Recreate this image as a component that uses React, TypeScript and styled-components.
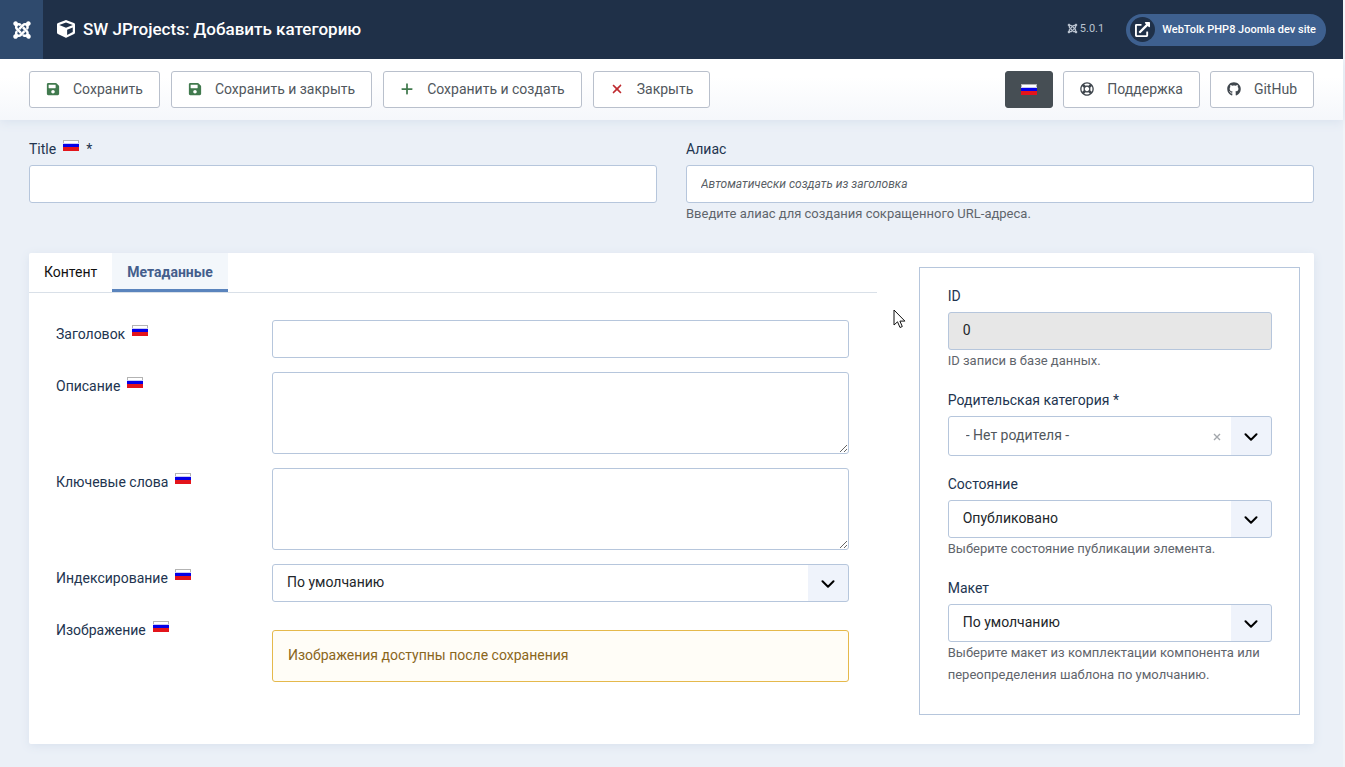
import React, { useState } from "react";
import styled, { createGlobalStyle } from "styled-components";
import { FaJoomla, FaSave, FaCube, FaExternalLinkAlt, FaGithub, FaRegLifeRing } from "react-icons/fa";
import { FaPlus, FaXmark } from "react-icons/fa6";

const GlobalStyle = createGlobalStyle`
  *, *::before, *::after { box-sizing: border-box; }
  body {
    margin: 0;
    background: #ebf0f7;
    color: #22262a;
    font: 400 14px/22px Roboto, "Open Sans", sans-serif;
  }
  button, input, select, textarea { font: inherit; color: inherit; margin: 0; }
  a { color: inherit; text-decoration: none; }
`;

const Page = styled.div`
  min-height: 100vh;
  border-right: 2px solid #f1f4f8;
`;

const Header = styled.header`
  position: relative;
  z-index: 1;
  display: flex;
  align-items: center;
  height: 59px;
  padding-right: 17px;
  background: #1f3048;
  color: #fff;
`;

const HomeLink = styled.a`
  display: flex;
  align-items: center;
  justify-content: center;
  align-self: stretch;
  width: 43px;
  background: #2f4a6d;
`;

const PageTitle = styled.h1`
  display: flex;
  align-items: center;
  gap: 8px;
  flex: 1;
  margin: 0 0 0 14px;
  padding-bottom: 2px;
  font-size: 17px;
  font-weight: 500;
`;

const Version = styled.div`
  display: flex;
  align-items: center;
  gap: 2px;
  margin-right: 22px;
  padding-bottom: 2px;
  color: #b9c2cf;
  font-size: 11px;
`;

const SiteLink = styled.a`
  display: flex;
  align-items: center;
  gap: 7px;
  height: 32px;
  padding: 0 10px 0 4px;
  border-radius: 16px;
  background: #3e608f;
  font-size: 11px;
  font-weight: 500;
`;

const SiteIcon = styled.span`
  display: flex;
  align-items: center;
  justify-content: center;
  width: 25px;
  height: 25px;
  border-radius: 50%;
  background: #1f3048;
`;

const Toolbar = styled.div`
  display: flex;
  justify-content: space-between;
  padding: 12px 29px;
  background: linear-gradient(#fff 30%, #f5f7fb);
  box-shadow: 0 2px 10px #d9e2ee;
`;

const ButtonGroup = styled.div<{ $gap: number }>`
  display: flex;
  gap: ${(p) => p.$gap}px;
`;

const ToolButton = styled.button`
  display: flex;
  align-items: center;
  gap: 11px;
  height: 37px;
  padding: 0 16px 2px 14px;
  border: 1px solid #b9c0cc;
  border-radius: 3px;
  background: #fff;
  color: #51575d;
`;

const ToolIcon = styled.span<{ $tone?: string }>`
  display: flex;
  justify-content: center;
  width: 18px;
  color: ${(p) => p.$tone ?? "#40474e"};
`;

const Main = styled.main`
  padding: 18px 29px 23px;
`;

const TitleRow = styled.div`
  display: grid;
  grid-template-columns: 1fr 1fr;
  gap: 29px;
  margin-bottom: 28px;
`;

const Field = styled.div`
  display: flex;
  flex-direction: column;
`;

const Label = styled.label`
  display: flex;
  gap: 7px;
  margin-bottom: 5px;
  color: #22344f;
`;

const FlagSvg = styled.svg`
  flex: none;
  width: 16px;
  height: 11px;
  margin-top: 2px;
`;

const LanguageButton = styled(ToolButton)`
  padding: 0 15px;
  border-color: #464e54;
  background: #464e54;
  ${FlagSvg} { margin-top: 0; }
`;

const Input = styled.input`
  width: 100%;
  height: 38px;
  padding: 0 14px 2px;
  border: 1px solid #b6c6dc;
  border-radius: 3px;
  background: #fff;
  &::placeholder {
    color: #5a5f66;
    font-size: 12px;
    font-style: italic;
    opacity: 1;
  }
  &:read-only {
    background: #e7e7e7;
  }
`;

const TextArea = styled.textarea`
  display: block;
  width: 100%;
  height: 82px;
  padding: 8px 14px;
  border: 1px solid #b6c6dc;
  border-radius: 3px;
  background: #fff;
  resize: vertical;
`;

const Help = styled.small`
  color: #5f656c;
  font-size: 13px;
`;

const Card = styled.section`
  display: grid;
  grid-template-columns: minmax(0, 1fr) 30%;
  align-items: start;
  gap: 42px;
  padding: 0 14px 29px 0;
  border-radius: 2px;
  background: #fff;
  box-shadow: 0 2px 10px #d9e2ee;
`;

const TabList = styled.div`
  display: flex;
  border-bottom: 1px solid #d9e0e8;
`;

const Tab = styled.button<{ $active: boolean }>`
  height: 39px;
  padding: 0 15px 2px;
  border: 0;
  background: ${(p) => (p.$active ? "#f3f7fb" : "transparent")};
  box-shadow: ${(p) => (p.$active ? "inset 0 -3px #5a84bd" : "none")};
  color: ${(p) => (p.$active ? "#445e8c" : "#111")};
  font-weight: ${(p) => (p.$active ? 700 : 400)};
`;

const Panel = styled.div`
  display: grid;
  gap: 14px;
  padding: 27px 28px 0 27px;
`;

const FormRow = styled.div`
  display: grid;
  grid-template-columns: 216px minmax(0, 1fr);
  align-items: start;
  & > ${Label} { margin: 3px 0 0; }
`;

const Alert = styled.div`
  margin-top: 14px;
  padding: 13px 15px 15px;
  border: 1px solid #e5b94c;
  border-radius: 3px;
  background: #fffdf7;
  color: #8a661c;
`;

const Aside = styled.fieldset`
  display: grid;
  gap: 17px;
  min-width: 0;
  margin: 14px 0 0;
  padding: 17px 27px 28px 28px;
  border: 1px solid #b6c6dc;
`;

const SelectBox = styled.div`
  position: relative;
`;

const NativeSelect = styled.select<{ $large?: boolean }>`
  appearance: none;
  display: block;
  width: 100%;
  height: ${(p) => (p.$large ? 40 : 38)}px;
  padding: 0 56px 2px ${(p) => (p.$large ? 17 : 14)}px;
  border: 1px solid #b6c6dc;
  border-radius: 3px;
  background: linear-gradient(#eff3fb, #eff3fb) right / 40px 100% no-repeat #fff;
  color: ${(p) => (p.$large ? "#51575d" : "#22262a")};
`;

const Chevron = styled.svg`
  position: absolute;
  top: 50%;
  right: 14px;
  width: 14px;
  height: 8px;
  margin-top: -3px;
  pointer-events: none;
`;

const ClearButton = styled.button`
  position: absolute;
  top: 50%;
  right: 51px;
  display: flex;
  margin-top: -3px;
  padding: 0;
  border: 0;
  background: none;
`;

const Pointer = styled.svg`
  position: absolute;
  top: 309px;
  left: 893px;
  width: 13px;
  height: 20px;
  pointer-events: none;
`;

function Flag() {
  return (
    <FlagSvg viewBox="0 0 16 11" aria-hidden="true">
      <rect width="16" height="11" fill="#b3b3b3" />
      <rect x="1" y="1" width="14" height="3" fill="#fff" />
      <rect y="3" width="16" height="1" fill="#ccccf4" />
      <rect y="4" width="16" height="3" fill="#0500e8" />
      <rect y="7" width="16" height="4" fill="#e3141b" />
    </FlagSvg>
  );
}

interface SelectProps {
  id: string;
  option: string;
  clearable?: boolean;
}

function Select({ id, option, clearable }: SelectProps) {
  return (
    <SelectBox>
      <NativeSelect id={id} $large={clearable}>
        <option>{option}</option>
      </NativeSelect>
      {clearable && (
        <ClearButton type="button" aria-label="Очистить">
          <svg width="8" height="8" viewBox="0 0 8 8" stroke="#a3a7ac" strokeWidth="1.4">
            <path d="M1 1l6 6M7 1L1 7" />
          </svg>
        </ClearButton>
      )}
      <Chevron viewBox="0 0 14 8" fill="none" stroke="#000" strokeWidth="2" strokeLinecap="round" strokeLinejoin="round">
        <path d="M1.5 1.2L7 6.7l5.500-5.500" />
      </Chevron>
    </SelectBox>
  );
}

const green = "#417a4e";
const red = "#bf2a2f";

export default function App() {
  const [tab, setTab] = useState("meta");
  return (
    <Page>
      <GlobalStyle />
      <Header>
        <HomeLink href="#" aria-label="Joomla">
          <FaJoomla size={20} />
        </HomeLink>
        <PageTitle>
          <FaCube size={18} />
          SW JProjects: Добавить категорию
        </PageTitle>
        <Version>
          <FaJoomla size={11} />
          5.0.1
        </Version>
        <SiteLink href="#">
          <SiteIcon>
            <FaExternalLinkAlt size={15} />
          </SiteIcon>
          WebTolk PHP8 Joomla dev site
        </SiteLink>
      </Header>

      <Toolbar>
        <ButtonGroup $gap={11}>
          <ToolButton type="button">
            <ToolIcon $tone={green}><FaSave size={14} /></ToolIcon>
            Сохранить
          </ToolButton>
          <ToolButton type="button">
            <ToolIcon $tone={green}><FaSave size={14} /></ToolIcon>
            Сохранить и закрыть
          </ToolButton>
          <ToolButton type="button">
            <ToolIcon $tone={green}><FaPlus size={14} /></ToolIcon>
            Сохранить и создать
          </ToolButton>
          <ToolButton type="button">
            <ToolIcon $tone={red}><FaXmark size={14} /></ToolIcon>
            Закрыть
          </ToolButton>
        </ButtonGroup>
        <ButtonGroup $gap={10}>
          <LanguageButton type="button" aria-label="Русский">
            <Flag />
          </LanguageButton>
          <ToolButton as="a" href="#">
            <ToolIcon><FaRegLifeRing size={14} /></ToolIcon>
            Поддержка
          </ToolButton>
          <ToolButton as="a" href="#">
            <ToolIcon><FaGithub size={14} /></ToolIcon>
            GitHub
          </ToolButton>
        </ButtonGroup>
      </Toolbar>

      <Main>
        <TitleRow>
          <Field>
            <Label htmlFor="title">Title <Flag /> *</Label>
            <Input id="title" required />
          </Field>
          <Field>
            <Label htmlFor="alias">Алиас</Label>
            <Input id="alias" placeholder="Автоматически создать из заголовка" />
            <Help>Введите алиас для создания сокращенного URL-адреса.</Help>
          </Field>
        </TitleRow>

        <Card>
          <div>
            <TabList role="tablist">
              <Tab type="button" role="tab" aria-selected={tab === "content"} $active={tab === "content"} onClick={() => setTab("content")}>
                Контент
              </Tab>
              <Tab type="button" role="tab" aria-selected={tab === "meta"} $active={tab === "meta"} onClick={() => setTab("meta")}>
                Метаданные
              </Tab>
            </TabList>
            {tab === "meta" && (
              <Panel role="tabpanel">
                <FormRow>
                  <Label htmlFor="meta-title">Заголовок <Flag /></Label>
                  <Input id="meta-title" />
                </FormRow>
                <FormRow>
                  <Label htmlFor="meta-description">Описание <Flag /></Label>
                  <TextArea id="meta-description" />
                </FormRow>
                <FormRow>
                  <Label htmlFor="meta-keywords">Ключевые слова <Flag /></Label>
                  <TextArea id="meta-keywords" />
                </FormRow>
                <FormRow>
                  <Label htmlFor="meta-robots">Индексирование <Flag /></Label>
                  <Select id="meta-robots" option="По умолчанию" />
                </FormRow>
                <FormRow>
                  <Label as="span">Изображение <Flag /></Label>
                  <Alert>Изображения доступны после сохранения</Alert>
                </FormRow>
              </Panel>
            )}
          </div>

          <Aside>
            <Field>
              <Label htmlFor="record-id">ID</Label>
              <Input id="record-id" value="0" readOnly />
              <Help>ID записи в базе данных.</Help>
            </Field>
            <Field>
              <Label htmlFor="parent">Родительская категория *</Label>
              <Select id="parent" option="- Нет родителя -" clearable />
            </Field>
            <Field>
              <Label htmlFor="state">Состояние</Label>
              <Select id="state" option="Опубликовано" />
              <Help>Выберите состояние публикации элемента.</Help>
            </Field>
            <Field>
              <Label htmlFor="layout">Макет</Label>
              <Select id="layout" option="По умолчанию" />
              <Help>Выберите макет из комплектации компонента или переопределения шаблона по умолчанию.</Help>
            </Field>
          </Aside>
        </Card>
      </Main>

      <Pointer viewBox="0 0 13 20" aria-hidden="true">
        <path d="M1 1v15l3.500-3.200L7 18.500l2.300-1-2.400-5.400h5z" fill="#fff" stroke="#111" strokeWidth="1" />
      </Pointer>
    </Page>
  );
}
